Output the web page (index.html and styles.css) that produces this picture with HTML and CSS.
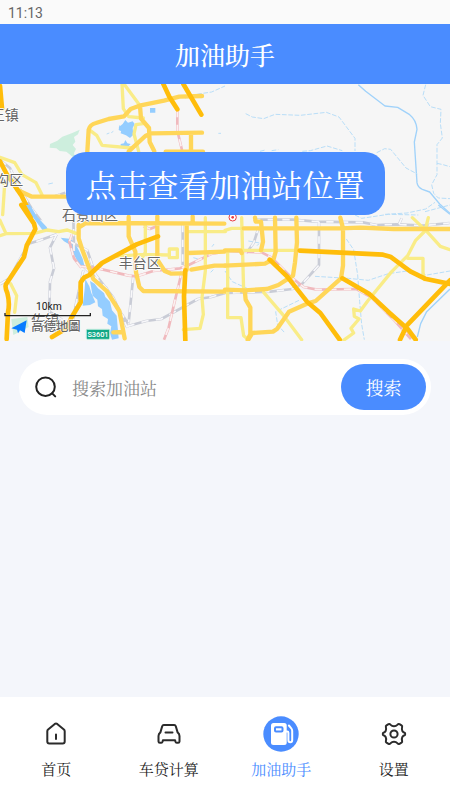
FILE: index.html
```html
<!DOCTYPE html>
<html lang="zh-CN">
<head>
<meta charset="utf-8">
<meta name="viewport" content="width=device-width, initial-scale=1">
<title>加油助手</title>
<link rel="stylesheet" href="styles.css">
</head>
<body>
<div class="status">11:13</div>
<header class="header"><h1 class="title">加油助手</h1></header>
<main class="main">
  <section class="map">
    <svg class="map-art" viewBox="0 0 1350 771" preserveAspectRatio="xMidYMid slice" aria-hidden="true">
      <!-- north-west -->
      <g transform="translate(0 -12)">
        <path class="park" d="M150 192l22-10 15-12 28-10 24-11-5 14-12 8 4 14-8 10 10 12-6 12 3 18-14-12-12-10-20-2-10-8-20-2z"/>
        <path class="water" d="M368 132l8-12 8 8 14-4 6 8-6 12 2 20-10 10-12-8-16-6 2-10-8-8zM362 192l10-2 4-10 6 10 10 2-8 8-8 6-14-6zM358 136l8 6-2 12-8-4zM450 84h16v14h-16z"/>
        <path class="stream" d="M555 54l40-12 40-6 40-18M320 162l8-3M334 158l6-4M145 312l14-3M655 160h8"/>
        <path class="rail" d="M0 240l30 24 28 60 36 60 30 40M160 350l36-12"/>
        <path class="rail-dash" d="M0 240l30 24 28 60 36 60 30 40M160 350l36-12"/>
        <path class="metro" d="M532 90v62l14 58"/>
        <path class="metro-dash" d="M532 90v62l14 58"/>
        <path class="lane" d="M366 12l4 74 16 24 44 4M372 12l46 62M266 148l24 18 16 30 90 8M434 130l-26 4-6 28 14 52M0 232l44 16 22 36 42 24 18 36M0 300l14 12-6 92"/>
        <path class="street" d="M262 215l4-66q4-16 22-20l38-12 46-8 20-22 30-11 70-14 46-12 68-2M420 78l3 38 24 28 2 42 14 28M386 214l50-46 18-8 152-2M573 160v54M497 215h112M52 330l44 20h100"/>
        <path class="highway" d="M490 12l18 38 24 38M550 12l54 92M0 18l6 68M0 244l20 38 44 64 30 62"/>
      </g>
      <!-- north-east -->
      <g transform="translate(675 -12)">
        <path class="river" d="M400 14l22 20 58 44 38 4 36 22q20 16 22 44l-8 38 6 92 2 30q2 14 16 20l22 8 30 36 31 28"/>
        <path class="stream" d="M602 14l-8 32 22 34 32 8-2 42 6 44-16 20v90l-16 30 6 26 14 14 36 2M636 250l18 4 21 6M62 101l20 10 34 5 34-13 76 3 78-9 38 14 48 64v38M105 214l16-4M140 212l20-3M232 214l24-2 50-14 46 14M455 218l24-12 18 2 46 56 34 18M480 403l66-4 56-12 28-20"/>
      </g>
      <!-- south-west -->
      <g transform="translate(0 363)">
        <path class="water" d="M78 0l12 0 22 36 28 30 6 14-18-4-28-38zM182 98l26 3 14 8 12 22 14 30 6 24-14-2-18-34-12-30-18-10zM256 222l12 22 6 20 12 28-16 8-22 2 6-50zM270 228l14 8 10 14 18 14 4 12 14 14 6 26 14 16 6 68-20 4-6-20 4-20-12-8 2-14-16-10-2-20-12-8-2-20-14-12z"/>
        <path class="park" d="M34 342l48-6 4 30-46 24z"/>
        <path class="stream" d="M636 125l6-8M580 158l14 4M632 202l8-8"/>
        <path class="rail" d="M0 238l28-18 58-104 34-10 50-18M170 88l-20 40 12 62-12 40-2 90 38 24M206 108l56 28 24 72 54 70 42 90M250 184l70 66 32 58 34 50M382 364l56-16 46-6 110-60 40-6 42-12M220 28l2 110M250 196l-22 100-14 80M400 212l-14 140M548 60v120"/>
        <path class="rail-dash" d="M0 238l28-18 58-104 34-10 50-18M170 88l-20 40 12 62-12 40-2 90 38 24M206 108l56 28 24 72 54 70 42 90M250 184l70 66 32 58 34 50M382 364l56-16 46-6 110-60 40-6 42-12M220 28l2 110M250 196l-22 100-14 80M400 212l-14 140M548 60v120"/>
        <path class="metro" d="M216 88l-8 22 14 50 22 28M244 184l50 6 92 22 24 2 50-16 80-8 26-10 70-34 24-4M546 198l-24 100-16 70-14 36M430 64l20 8 20-8"/>
        <path class="metro-dash" d="M216 88l-8 22 14 50 22 28M244 184l50 6 92 22 24 2 50-16 80-8 26-10 70-34 24-4M546 198l-24 100-16 70-14 36M430 64l20 8 20-8"/>
        <path class="lane" d="M0 46l18 40 84-1 40-10 34 5 26-5 26 10M0 92l18-6M32 236l18 36-6 50M346 154l84-6 74 2M436 56v86l-8 14M616 38v160l-10 80 4 50-10 42-50 4M564 80h112M508 132h24v26h-24z"/>
        <path class="street" d="M236 60v40l10 32 34 90 40 36 38 60 16 82M236 68l22-14 415 2M386 36v58l20 46 2 62 10 44 12 12 248 2M472 34v130l22 34 20 8 36-1M560 60v134M574 194l70-12h34M564 144l110-4M578 34v20M340 382l26-1"/>
        <path class="highway" d="M64 0l38 56 4 16-26 50-8 34-54 82q-4 8 4 26 8 30 2 58l-4 80M474 94l-64 24-104 56-38 36-16 8-10 14v60l-28 46-12 30-46 28M556 196l-4 78 4 132"/>
      </g>
      <!-- south-east -->
      <g transform="translate(675 363)">
        <path class="stream" d="M0 198l22 32 44 20M70 108l34 6-8 8M364 102l22 32 12 76 6 80 6 68 8 46M270 214l100 6 60 6 60-20 56-8 60 12 69-12M222 286l-70 34 6 40 20 22M390 30l20 10 80-12 90 2M600 20l75-20"/>
        <path class="river" d="M675 252l-70 68-18 36-10 40M640 0l35 28"/>
        <path class="rail" d="M84 44h120l70 6 140 2 40 8 60-2 80 4 80-8M102 64l-16 50-22 30M282 50v130l-50 56-30 16-66 8-130 4M522 58l8-18"/>
        <path class="rail-dash" d="M84 44h120l70 6 140 2 40 8 60-2 80 4 80-8M102 64l-16 50-22 30M282 50v130l-50 56-30 16-66 8-130 4M522 58l8-18"/>
        <path class="metro" d="M0 138l110 4 30 16 60 60 36 28 40 8 118-2 46 26 70 70 48 54"/>
        <path class="metro-dash" d="M0 138l110 4 30 16 60 60 36 28 40 8 118-2 46 26 70 70 48 54"/>
        <path class="lane" d="M0 76l20-6h35M50 38l6 222M8 138v200h40l8 54 12 10M116 262l60 70 54 72M56 136h164M562 38l44 42 40 44 29 10M610 38l-10 40-28 28-24 46-50 50-70 86-22 30-20-6 2 22 14 8-24 28 8 14-36 26M548 160h46v42l4 22"/>
        <path class="street" d="M0 136h46l4 8M0 182l120-6 26-14 6-22-2-102M90 38l2 12h16l6 60-6 26M56 70h290l60-2 100 4 169 0M0 254l60 2 66-4 34-12 44-28 6-40 6-60-2-74M346 38l8 32v112l-6 38-76 68-26 8-54 24-36 52-12 8-62 4-12 20M60 264l2 20 14 24v80l-8 16"/>
        <path class="highway" d="M224 137l250 12 22 6 60 44 44 22 75 16M134 164l52 50 60 76 40 34 58 80M352 220l80 46 60 56 56 50 24 32M675 226l-130 136-20 42"/>
        <circle class="capital" cx="23" cy="37" r="11"/><circle class="capital-dot" cx="23" cy="37" r="4"/>
      </g>
      <g class="place">
        <text x="-28" y="108">王镇</text>
        <text x="-14" y="302">沟区</text>
        <text x="186" y="408">石景山区</text>
        <text x="356" y="552">丰台区</text>
        <text x="94" y="722">佐镇</text>
      </g>
      <path class="scale-line" d="M15 687v8h256v-8"/>
      <text class="scale-text" x="108" y="678">10km</text>
      <path class="pin" d="M80 709l-46 24 17 4 3 11 6-9 14 8z"/>
      <text class="brand" x="94" y="742">高德地圖</text>
      <rect class="sign" x="259" y="736" width="70" height="30" rx="4"/>
      <text class="sign-text" x="294" y="759">S3601</text>
    </svg>
    <button class="map-button" type="button">点击查看加油站位置</button>
  </section>
  <form class="search">
    <label class="search-label" for="station">
      <svg class="search-icon" viewBox="0 0 24 24" role="img" aria-label="搜索加油站"><circle cx="11.500" cy="11.700" r="9.300"/><path d="M18.200 18.400l3 3"/></svg>
    </label>
    <input class="search-input" id="station" type="text" placeholder="搜索加油站">
    <button class="search-button" type="submit">搜索</button>
  </form>
</main>
<nav class="tabs">
  <a class="tab" href="#home">
    <svg class="tab-icon" viewBox="0 0 36 36" aria-hidden="true"><path d="M9.300 15.200v10.300a2 2 0 0 0 2 2h13.400a2 2 0 0 0 2-2V15.200q0-1-.8-1.700l-6.700-5.600q-1.200-.9-2.400 0l-6.700 5.600q-.8.700-.8 1.700zM18 18.500v4.500"/></svg>
    <span>首页</span>
  </a>
  <a class="tab" href="#loan">
    <svg class="tab-icon" viewBox="0 0 36 36" aria-hidden="true"><path d="M12.800 9h10.400q1.200 0 1.600 1.200l1.800 6.200q1.900 1.400 1.900 3.600v5.400q0 1.400-1.400 1.400h-1.300q-1.200 0-1.400-1.200l-.3-1.300H11.900l-.3 1.300q-.2 1.200-1.400 1.200H8.900q-1.400 0-1.400-1.400V20q0-2.200 1.900-3.600l1.800-6.200Q11.600 9 12.800 9zM14.500 16.500h7"/></svg>
    <span>车贷计算</span>
  </a>
  <a class="tab tab-active" href="#fuel" aria-current="page">
    <svg class="tab-icon" viewBox="0 0 36 36" aria-hidden="true"><circle class="disc" cx="18" cy="18" r="17.700"/><path class="pump" d="M10.500 7h10.700a2.500 2.500 0 0 1 2.500 2.500v17a2.500 2.500 0 0 1-2.500 2.500H10.500A2.500 2.500 0 0 1 8 26.500v-17A2.500 2.500 0 0 1 10.500 7z"/><rect class="screen" x="12" y="11.200" width="7.500" height="4.300" rx="1"/><path class="hose" d="M23 15.500h1.200q1.200 0 1.200 1.200v7.300q0 2.300 1.900 2.300t1.900-2.300V15q0-1.500-.8-2.500l-2.500-3"/></svg>
    <span>加油助手</span>
  </a>
  <a class="tab" href="#settings">
    <svg class="tab-icon" viewBox="0 0 36 36" aria-hidden="true"><path d="M12.500 8.200q1.100-.6 1.900.4c2.100 2.300 5.100 2.300 7.200 0q.8-1 1.900-.4l2 1.200q1 .7.600 1.900c-.9 2.900.7 5.200 2.500 5.500q.6.200.6 1.200t-.6 1.200c-1.800.3-3.400 2.600-2.500 5.500q.4 1.200-.6 1.900l-2 1.200q-1.100.6-1.900-.4c-2.100-2.300-5.100-2.300-7.200 0q-.8 1-1.900.4l-2-1.200q-1-.7-.6-1.900c.9-2.900-.7-5.200-2.500-5.500q-.6-.2-.6-1.200t.6-1.200c1.800-.3 3.400-2.600 2.500-5.500q-.4-1.200.6-1.900z"/><circle cx="18" cy="18" r="3.600"/></svg>
    <span>设置</span>
  </a>
</nav>
</body>
</html>
```
FILE: styles.css
```css
* { box-sizing: border-box; }
body {
  margin: 0;
  min-height: 100vh;
  display: flex;
  flex-direction: column;
  background: #f4f6fb;
  color: #222;
  font-family: "Noto Serif CJK SC", "Noto Serif SC", "Noto Sans CJK SC", serif;
}
button, input { font-family: inherit; border: 0; padding: 0; }
.status {
  height: 24px;
  padding: 1px 8px 0;
  background: #fafafa;
  color: #666;
  font: 400 14px/24px Roboto, sans-serif;
}
.header {
  height: 60px;
  display: flex;
  align-items: center;
  justify-content: center;
  background: #4a8cff;
}
.title { margin: 0; color: #fff; font-size: 25px; font-weight: 500; line-height: 36px; }
.main { flex: 1; }
.map {
  position: relative;
  height: 257px;
  display: flex;
  justify-content: center;
  align-items: flex-start;
  padding-top: 68px;
  overflow: hidden;
  background: #f6f6f6;
}
.map-art { position: absolute; inset: 0; width: 100%; height: 100%; }
.map-art path { fill: none; stroke-linejoin: round; }
.map-art .water { fill: #94cdff; }
.map-art .park { fill: #cdeedd; }
.stream { stroke: #b9def8; stroke-width: 3; stroke-dasharray: 14 5; }
.river { stroke: #a0d2fa; stroke-width: 4; }
.rail { stroke: #c9ccd6; stroke-width: 8; }
.rail-dash { stroke: #f8f8fb; stroke-width: 5; stroke-dasharray: 22 22; }
.metro { stroke: #f0b9bd; stroke-width: 8; }
.metro-dash { stroke: #fbf1f1; stroke-width: 5; stroke-dasharray: 22 22; }
.lane { stroke: #f9ec87; stroke-width: 10; stroke-linecap: round; }
.street { stroke: #ffd658; stroke-width: 13; stroke-linecap: round; }
.highway { stroke: #ffbd0a; stroke-width: 14; stroke-linecap: round; }
.capital { fill: #fff; stroke: #e83b42; stroke-width: 3; }
.capital-dot { fill: #e83b42; }
.place {
  font: 42px "Noto Sans CJK SC", sans-serif;
  fill: #666;
  stroke: #fff;
  stroke-width: 4px;
  paint-order: stroke;
}
.scale-line { stroke: #222; stroke-width: 4; }
.scale-text { font: 31px Roboto, sans-serif; fill: #222; }
.map-art .pin { fill: #087bff; }
.brand {
  font: 500 37px "Noto Sans CJK SC", sans-serif;
  fill: #666;
  stroke: #fff;
  stroke-width: 3px;
  paint-order: stroke;
}
.sign { fill: #10a886; stroke: #b9eadb; stroke-width: 3; }
.sign-text { font: 500 22px Roboto, sans-serif; fill: #fff; text-anchor: middle; }
.map-button {
  position: relative;
  height: 63px;
  padding: 0 20px;
  border-radius: 20px;
  background: #4a8cff;
  color: #fff;
  font-size: 31px;
  line-height: 44px;
}
.search {
  height: 56px;
  margin: 18px 19px;
  padding: 5px;
  display: flex;
  align-items: center;
  border-radius: 28px;
  background: #fff;
}
.search-label { display: flex; padding: 0 14px 0 10px; }
.search-icon { width: 24px; height: 24px; fill: none; stroke: #222; stroke-width: 2; stroke-linecap: round; }
.search-input {
  flex: 1;
  min-width: 0;
  height: 46px;
  background: none;
  color: #222;
  font-size: 17px;
  outline: 0;
}
.search-input::placeholder { color: #888; opacity: 1; }
.search-button {
  width: 85px;
  height: 46px;
  border-radius: 23px;
  background: #4a8cff;
  color: #fff;
  font-size: 18px;
}
.tabs {
  height: 103px;
  padding-top: 19px;
  display: grid;
  grid-template-columns: repeat(4, 1fr);
  background: #fff;
}
.tab {
  display: flex;
  flex-direction: column;
  align-items: center;
  gap: 6px;
  color: #222;
  font-size: 15px;
  line-height: 22px;
  text-decoration: none;
}
.tab-active { color: #4a8cff; }
.tab-icon { width: 36px; height: 36px; fill: none; stroke: #2b2b2b; stroke-width: 2; stroke-linecap: round; stroke-linejoin: round; }
.tab-icon .disc { fill: #4a8cff; stroke: none; }
.tab-icon .pump { fill: #fff; stroke: none; }
.tab-icon .screen { stroke: #4a8cff; stroke-width: 2; fill: #fff; }
.tab-icon .hose { stroke: #fff; stroke-width: 2; }
```
